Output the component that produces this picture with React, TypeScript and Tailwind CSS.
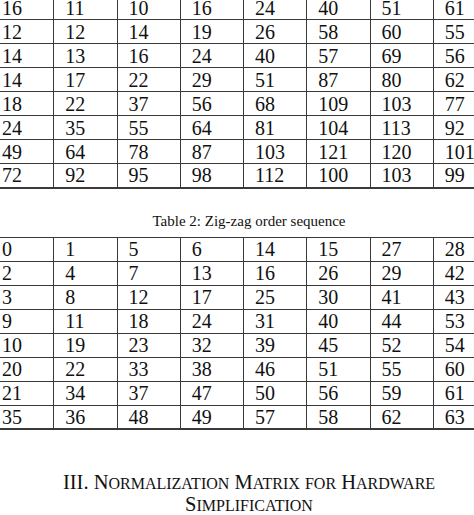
const quant = [
  [16, 11, 10, 16, 24, 40, 51, 61],
  [12, 12, 14, 19, 26, 58, 60, 55],
  [14, 13, 16, 24, 40, 57, 69, 56],
  [14, 17, 22, 29, 51, 87, 80, 62],
  [18, 22, 37, 56, 68, 109, 103, 77],
  [24, 35, 55, 64, 81, 104, 113, 92],
  [49, 64, 78, 87, 103, 121, 120, 101],
  [72, 92, 95, 98, 112, 100, 103, 99],
];

const zigzag = [
  [0, 1, 5, 6, 14, 15, 27, 28],
  [2, 4, 7, 13, 16, 26, 29, 42],
  [3, 8, 12, 17, 25, 30, 41, 43],
  [9, 11, 18, 24, 31, 40, 44, 53],
  [10, 19, 23, 32, 39, 45, 52, 54],
  [20, 22, 33, 38, 46, 51, 55, 60],
  [21, 34, 37, 47, 50, 56, 59, 61],
  [35, 36, 48, 49, 57, 58, 62, 63],
];

const Matrix = ({ rows, className }: { rows: number[][]; className?: string }) => (
  <table className={`table-fixed border-collapse w-[507px] ml-[-10px] ${className ?? ""}`}>
    <tbody>
      {rows.map((row, i) => (
        <tr key={i} className="h-[24px]">
          {row.map((v, j) => (
            <td
              key={j}
              className={`border border-[#3a3a3a] p-0 pl-[11px] text-[20px] leading-[22px] text-[#111] whitespace-nowrap align-middle [font-family:'Liberation_Serif','Times_New_Roman',serif] ${
                i === rows.length - 1 ? "border-b-2" : ""
              }`}
            >
              {v}
            </td>
          ))}
        </tr>
      ))}
    </tbody>
  </table>
);

// small caps drawn by hand: capital initial, smaller uppercase rest
const Word = ({ w }: { w: string }) => {
  if (w === w.toUpperCase()) return <span>{w}</span>;
  const first = w[0];
  const rest = w.slice(1);
  if (first === first.toLowerCase()) {
    return <span className="text-[16px] leading-none">{w.toUpperCase()}</span>;
  }
  return (
    <span>
      {first}
      <span className="text-[16px] leading-none">{rest.toUpperCase()}</span>
    </span>
  );
};

const SmallCaps = ({ text }: { text: string }) => (
  <>
    {text.split(" ").map((w, i) => (
      <span key={i}>
        {i > 0 ? " " : ""}
        <Word w={w} />
      </span>
    ))}
  </>
);

export default function App() {
  return (
    <div className="w-[474px] h-[515px] overflow-hidden bg-white text-[#111] [font-family:'Liberation_Serif','Times_New_Roman',serif]">
      <Matrix rows={quant} className="mt-[-5px]" />

      <div className="pl-[24px] text-center">
        <p className="mt-[23px] text-[15px] leading-[18px]">Table 2: Zig-zag order sequence</p>
      </div>

      <Matrix rows={zigzag} className="mt-[7px]" />

      <div className="pl-[24px] text-center">
        <h2 className="mt-[41px] text-[20.5px] leading-[22px]">
          <SmallCaps text="III. Normalization Matrix for Hardware" />
          <br />
          <SmallCaps text="Simplification" />
        </h2>
      </div>
    </div>
  );
}
